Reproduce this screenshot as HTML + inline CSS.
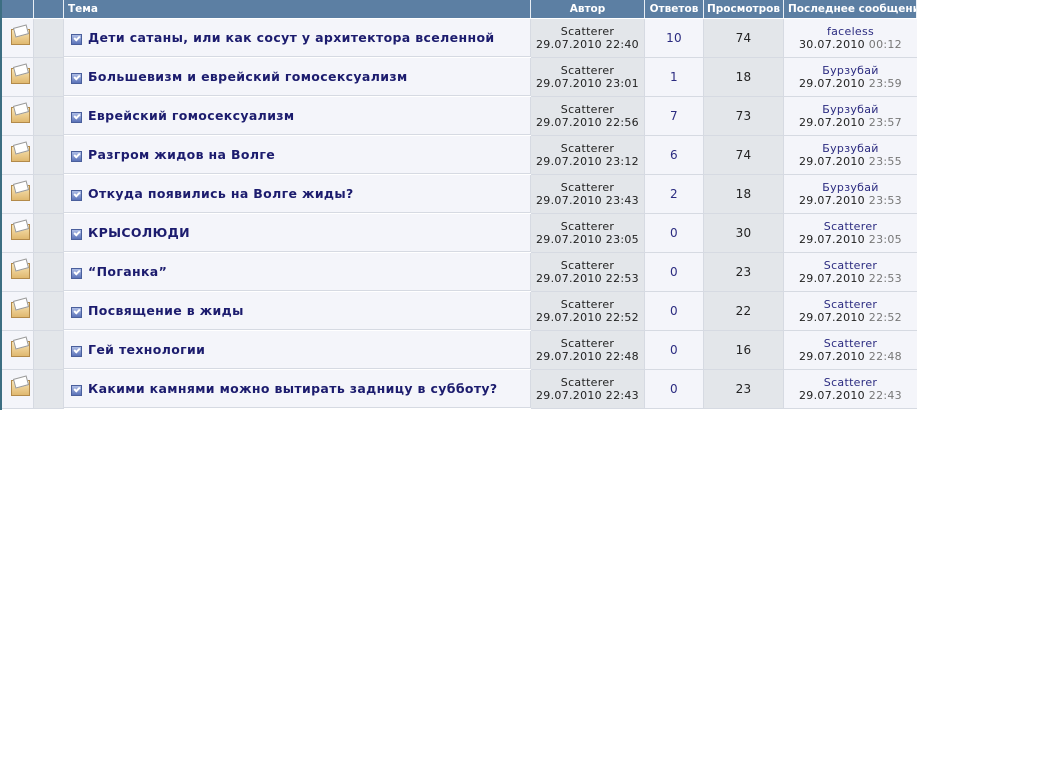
<!DOCTYPE html><html><head><meta charset="utf-8"><style>
body{margin:0;width:1037px;height:778px;background:#fff;position:relative;overflow:hidden;font-family:"DejaVu Sans","Liberation Sans",sans-serif}
.h{position:absolute;top:0;height:18px;background:#5c7fa3;color:#fff;font-weight:bold;font-size:10.5px;line-height:18px;text-align:center;border-right:1px solid #e8eef4;box-sizing:border-box}
.c{position:absolute;height:38px;border-bottom:1px solid #d6dae2;border-right:1px solid #d6dae2;box-sizing:content-box;font-size:11px;color:#222;text-align:center;line-height:13px;letter-spacing:0.3px}
.l{background:#f4f5fa}.g{background:#e3e6ea}
.t{text-align:left;font-weight:bold;font-size:12.5px;color:#1c1c6e;line-height:38px;padding-left:24px;box-sizing:border-box;letter-spacing:0.35px}
.cb{position:absolute;left:7px;top:15px;width:11px;height:11px;background:linear-gradient(#aebde6,#5a72b8);border:1px solid #4a5f9c;box-sizing:border-box}
.cb:after{content:"";position:absolute;left:2px;top:1px;width:4px;height:2px;border-left:2px solid #fff;border-bottom:2px solid #fff;transform:rotate(-45deg)}
.env{position:absolute;left:9px;top:10px;width:19px;height:16px;background:linear-gradient(#f8e4b4,#e0b870);border:1px solid #b38a4a;box-sizing:border-box}
.env:before{content:"";position:absolute;left:2px;top:-4px;width:12px;height:8px;background:#fff;border:1px solid #999;transform:rotate(-15deg)}
.a{color:#2b2b80}.s{color:#777}
</style></head><body>
<div style="position:absolute;left:0;top:0;width:2px;height:410px;background:#3c6e82"></div>
<div class="h" style="left:2px;width:32px"></div>
<div class="h" style="left:34px;width:30px"></div>
<div class="h" style="left:64px;width:467px;text-align:left;padding-left:4px">Тема</div>
<div class="h" style="left:531px;width:114px">Автор</div>
<div class="h" style="left:645px;width:59px">Ответов</div>
<div class="h" style="left:704px;width:80px">Просмотров</div>
<div class="h" style="left:784px;width:133px;text-align:left;padding-left:4px;white-space:nowrap;overflow:hidden">Последнее сообщение</div>
<div id="rows"></div>
<script>
var d=[["Дети сатаны, или как сосут у архитектора вселенной","22:40","10","74","faceless","30.07.2010","00:12"],
["Большевизм и еврейский гомосексуализм","23:01","1","18","Бурзубай","29.07.2010","23:59"],
["Еврейский гомосексуализм","22:56","7","73","Бурзубай","29.07.2010","23:57"],
["Разгром жидов на Волге","23:12","6","74","Бурзубай","29.07.2010","23:55"],
["Откуда появились на Волге жиды?","23:43","2","18","Бурзубай","29.07.2010","23:53"],
["КРЫСОЛЮДИ","23:05","0","30","Scatterer","29.07.2010","23:05"],
["“Поганка”","22:53","0","23","Scatterer","29.07.2010","22:53"],
["Посвящение в жиды","22:52","0","22","Scatterer","29.07.2010","22:52"],
["Гей технологии","22:48","0","16","Scatterer","29.07.2010","22:48"],
["Какими камнями можно вытирать задницу в субботу?","22:43","0","23","Scatterer","29.07.2010","22:43"]];
var h="";d.forEach(function(r,i){var y=19+39*i;
h+='<div class="c l" style="left:2px;top:'+y+'px;width:31px"><div class="env"></div></div>';
h+='<div class="c g" style="left:34px;top:'+y+'px;width:29px"></div>';
h+='<div class="c l t" style="left:64px;top:'+y+'px;width:467px"><div class="cb"></div>'+r[0]+'</div>';
h+='<div class="c g" style="left:531px;top:'+y+'px;width:113px;padding-top:6px;height:32px">Scatterer<br>29.07.2010 '+r[1]+'</div>';
h+='<div class="c l a" style="left:645px;top:'+y+'px;width:58px;line-height:38px;font-size:12px">'+r[2]+'</div>';
h+='<div class="c g" style="left:704px;top:'+y+'px;width:79px;line-height:38px;font-size:12px">'+r[3]+'</div>';
h+='<div class="c l" style="left:784px;top:'+y+'px;width:133px;padding-top:6px;height:32px;border-right:none"><span class="a">'+r[4]+'</span><br>'+r[5]+' <span class="s">'+r[6]+'</span></div>';
});document.getElementById("rows").innerHTML=h;
</script>
</body></html>
